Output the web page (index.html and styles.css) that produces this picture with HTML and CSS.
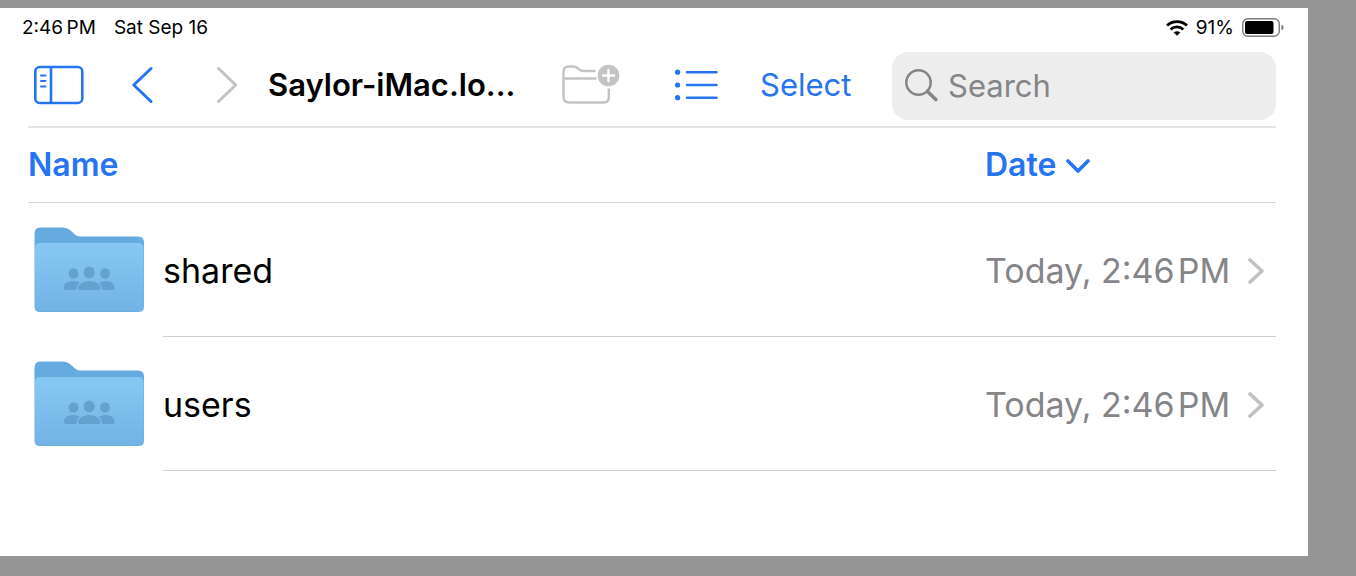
FILE: index.html
```html
<!DOCTYPE html>
<html lang="en">
<head>
<meta charset="utf-8">
<meta name="viewport" content="width=device-width, initial-scale=1">
<title>Saylor-iMac.local</title>
<link rel="stylesheet" href="styles.css">
</head>
<body>
<svg class="defs" width="0" height="0" aria-hidden="true">
  <defs>
    <linearGradient id="folder-front" x1="0" y1="0" x2="0" y2="1">
      <stop offset="0" stop-color="#87c8f3"/>
      <stop offset="1" stop-color="#73b3e5"/>
    </linearGradient>
    <symbol id="folder" viewBox="0 0 110 86">
      <path fill="#65abe0" d="M0.500 7Q0.500 0.500 6 0.500H29Q33 0.500 36 3L41 7.500Q43 9.500 46 9.500H104Q110 9.500 110 15.500V30H0.500Z"/>
      <path fill="#6aaee2" d="M0.500 30H110V79.500Q110 85 104 85H6Q0.500 85 0.500 79.500Z"/>
      <path fill="url(#folder-front)" d="M1 21Q1 16 6 16H104Q109.500 16 109.500 21V78.500Q109.500 84 104 84H6Q1 84 1 78.500Z"/>
      <g fill="#62a1d0">
        <ellipse cx="39.500" cy="46.500" rx="4.900" ry="5.300"/>
        <ellipse cx="71" cy="46.500" rx="4.900" ry="5.300"/>
        <ellipse cx="55.200" cy="45.500" rx="5.500" ry="5.900"/>
        <path d="M42.500 63H32Q29.800 63 29.800 61C29.800 56.500 34 54 39.500 54Q43 54 45.500 55.500Q42.500 58.500 42.500 62Z"/>
        <path d="M68 63H78.500Q80.700 63 80.700 61C80.700 56.500 76.500 54 71 54Q67.500 54 65 55.500Q68 58.500 68 62Z"/>
        <path d="M46 63Q43.800 63 43.800 61C44.500 57 49.500 54 55.200 54S66 57 66.700 61Q66.700 63 64.500 63Z"/>
      </g>
    </symbol>
    <symbol id="chevron" viewBox="0 0 16 26">
      <path d="M2 2L14 13L2 24" fill="none" stroke="currentColor" stroke-width="3.600" stroke-linecap="round" stroke-linejoin="round"/>
    </symbol>
  </defs>
</svg>

<div class="window">
  <header class="status">
    <div class="status-group status-time"><time>2:46&#8201;PM</time><span>Sat Sep 16</span></div>
    <div class="status-group">
      <svg width="22" height="16" viewBox="0 0 22 16" role="img" aria-label="Wi-Fi">
        <g fill="none" stroke="#000" stroke-width="2.800">
          <path d="M1 5.500C6.500 0.200 15.500 0.200 21 5.500"/>
          <path d="M4.600 9.500C8.300 6.100 13.700 6.100 17.400 9.500"/>
        </g>
        <path d="M11 15.800L7.700 12.600Q11 10 14.300 12.600Z"/>
      </svg>
      <span>91%</span>
      <svg class="battery" width="42" height="20" viewBox="0 0 42 20" role="img" aria-label="Battery">
        <rect x="0.750" y="0.750" width="36.500" height="17.500" rx="5" fill="none" stroke="#7a7a7a" stroke-width="1.400"/>
        <rect x="3" y="3" width="28.500" height="13" rx="2"/>
        <path d="M39.500 6.500Q41.600 7.500 41.600 9.500T39.500 12.500Z" fill="#7a7a7a"/>
      </svg>
    </div>
  </header>

  <nav class="toolbar" aria-label="Browser">
    <button class="tool" aria-label="Sidebar">
      <svg width="50" height="40" viewBox="0 0 50 40" fill="none" stroke="currentColor" stroke-width="2.600" stroke-linecap="round">
        <rect x="1.300" y="2" width="47" height="36" rx="4.500"/>
        <path d="M17 2.500V37.500"/><path stroke-width="2" d="M7 10.500H11.500M7 16H11.500M7 21.500H11.500"/>
      </svg>
    </button>
    <button class="tool back" aria-label="Back">
      <svg width="22" height="38" viewBox="0 0 22 38"><path d="M19 2.500L1.800 19L19 35.500" fill="none" stroke="currentColor" stroke-width="3" stroke-linecap="round" stroke-linejoin="round"/></svg>
    </button>
    <button class="tool forward" aria-label="Forward" disabled>
      <svg width="22" height="38" viewBox="0 0 22 38"><path d="M2.500 2.500L19.700 19L2.500 35.500" fill="none" stroke="currentColor" stroke-width="3" stroke-linecap="round" stroke-linejoin="round"/></svg>
    </button>
    <h1 class="title">Saylor-iMac.lo...</h1>
    <button class="tool new-folder" aria-label="New folder" disabled>
      <svg width="58" height="42" viewBox="0 0 58 42" fill="none" stroke="currentColor" stroke-width="2.400">
        <path d="M33.500 7H21Q18.500 7 16.500 5L15 3.800Q13.500 2.500 11 2.500H7Q1.500 2.500 1.500 8V33Q1.500 38.500 7 38.500H41.500Q46.800 38.500 46.800 33.500V24.500M2 14.500H34.500"/>
        <circle cx="46.500" cy="11.500" r="10.800" fill="currentColor" stroke="none"/>
        <path stroke="#fff" stroke-linecap="round" d="M46.500 6V17M41 11.500H52"/>
      </svg>
    </button>
    <button class="tool list-view" aria-label="List view">
      <svg width="44" height="32" viewBox="0 0 44 32" fill="none" stroke="currentColor" stroke-width="2.500" stroke-linecap="round">
        <path d="M13 3.200H42.500M13 16H42.500M13 28.700H42.500"/>
        <g fill="currentColor" stroke="none"><circle cx="3.600" cy="3.200" r="2.600"/><circle cx="3.600" cy="16" r="2.600"/><circle cx="3.600" cy="28.700" r="2.600"/></g>
      </svg>
    </button>
    <button class="tool select">Select</button>
    <label class="search">
      <svg width="34" height="34" viewBox="0 0 34 34" fill="none" stroke="currentColor" stroke-linecap="round" aria-hidden="true">
        <circle cx="14.500" cy="13.500" r="12.200" stroke-width="2.500"/><path d="M23.500 22.500L31.800 30.500" stroke-width="3.600"/>
      </svg>
      <input type="search" placeholder="Search" aria-label="Search">
    </label>
  </nav>

  <main>
    <table class="files">
      <colgroup><col class="col-icon"><col><col class="col-date"></colgroup>
      <thead>
        <tr>
          <th colspan="2" scope="col"><button class="sort">Name</button></th>
          <th scope="col"><button class="sort">Date
            <svg width="24" height="15" viewBox="0 0 24 15" aria-hidden="true"><path d="M2 3L12 13L22 3" fill="none" stroke="currentColor" stroke-width="3.600" stroke-linecap="round" stroke-linejoin="round"/></svg></button></th>
        </tr>
      </thead>
      <tbody>
        <tr>
          <td class="icon"><svg width="110" height="86" aria-hidden="true"><use href="#folder"/></svg></td>
          <td class="name">shared</td>
          <td class="date"><div class="date-line"><span>Today, 2:46&#8202;PM</span><svg width="16" height="26" aria-hidden="true"><use href="#chevron"/></svg></div></td>
        </tr>
        <tr>
          <td class="icon"><svg width="110" height="86" aria-hidden="true"><use href="#folder"/></svg></td>
          <td class="name">users</td>
          <td class="date"><div class="date-line"><span>Today, 2:46&#8202;PM</span><svg width="16" height="26" aria-hidden="true"><use href="#chevron"/></svg></div></td>
        </tr>
      </tbody>
    </table>
  </main>
</div>
</body>
</html>
```

FILE: styles.css
```css
:root {
  --blue: #2674f0;
  --muted: #c3c3c4;
  --gray: #858588;
}

* { box-sizing: border-box; }

body {
  margin: 0;
  min-height: 100vh;
  padding: 8px 48px 20px 0;
  display: flex;
  background: #959595;
  color: #000;
  font-family: Inter, "Liberation Sans", sans-serif;
}

.defs { position: absolute; }

svg { display: block; flex: none; }

.window { flex: 1; min-width: 0; background: #fff; }

.status {
  display: flex;
  justify-content: space-between;
  padding: 8px 24px 6px 22px;
  font-size: 19px;
  line-height: 24px;
}

.status-group { display: flex; align-items: center; gap: 8px; }
.status-time { gap: 18px; }

.toolbar {
  display: flex;
  align-items: center;
  margin: 0 32px 0 28px;
  padding: 6px 0;
  border-bottom: 2px solid #e4e4e5;
}

button {
  padding: 0;
  border: 0;
  background: none;
  color: var(--blue);
  font: inherit;
}

button:disabled { color: var(--muted); }

.tool { flex: none; margin: 0 0 2px 6px; }
.back { margin-left: 48px; }
.forward { margin-left: 62px; }

.title {
  flex: none;
  width: 246px;
  margin: 0 0 2px 30px;
  font-size: 31px;
  line-height: 40px;
  font-weight: 600;
  white-space: nowrap;
}

.new-folder { margin-left: 48px; }
.list-view { margin-left: 54px; }

.select {
  width: 92px;
  margin-left: 42px;
  font-size: 31px;
  line-height: 40px;
  text-align: left;
}

.search {
  flex: 1;
  min-width: 0;
  display: flex;
  align-items: center;
  gap: 10px;
  height: 68px;
  margin-left: 40px;
  padding: 0 12px;
  border-radius: 16px;
  background: #ededee;
  color: var(--gray);
}

.search input {
  flex: 1;
  min-width: 0;
  padding: 0;
  border: 0;
  outline: 0;
  background: none;
  color: #000;
  font: inherit;
  font-size: 31px;
  line-height: 40px;
  appearance: none;
}

.search input::placeholder { color: var(--gray); opacity: 1; }

main { padding: 0 32px 0 28px; }

.files {
  width: 100%;
  table-layout: fixed;
  border-collapse: separate;
  border-spacing: 0;
}

.col-icon { width: 135px; }
.col-date { width: 291px; }

th {
  height: 75px;
  padding: 0;
  border-bottom: 1px solid #d3d3d4;
  text-align: left;
}

.sort {
  display: flex;
  align-items: center;
  gap: 10px;
  font-size: 32px;
  line-height: 40px;
  font-weight: 600;
}

td {
  height: 134px;
  padding: 0;
  font-size: 34px;
  line-height: 44px;
}

.icon { padding-left: 6px; }

.name,
.date {
  padding-top: 2px;
  border-bottom: 1px solid #d0d0d1;
}

.date-line {
  display: flex;
  align-items: center;
  justify-content: space-between;
  padding-right: 12px;
  color: var(--gray);
  white-space: nowrap;
}

.date-line svg { color: #c1c1c3; }
```
